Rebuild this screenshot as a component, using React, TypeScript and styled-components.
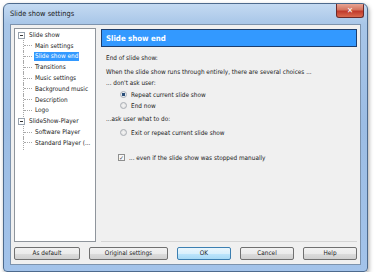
import styled, { createGlobalStyle } from "styled-components";

const GlobalStyle = createGlobalStyle`
  body {
    margin: 0;
    background: #ffffff;
    font-family: Tahoma, "DejaVu Sans Condensed", "Liberation Sans", sans-serif;
  }
`

const Window = styled.div`
  margin: 3px 0 0 3px;
  width: 365px;
  height: 269px;
  box-sizing: border-box;
  border: 1px solid #4d6a8d;
  border-radius: 6px 6px 4px 4px;
  background: linear-gradient(180deg, #c4daf2 0px, #a8c6e8 20px, #9cbde4 120px, #a3c3ea 100%);
  box-shadow: 1px 2px 4px rgba(0, 0, 0, 0.35);
  display: flex;
  flex-direction: column;
  overflow: hidden;
`

const TitleBar = styled.div`
  height: 20px;
  display: flex;
  align-items: flex-start;
  justify-content: space-between;
  padding: 0 3px 0 6px;
`

const Title = styled.span`
  font-size: 7.4px;
  color: #1a1a1a;
  margin-top: 5px;
`

const CloseButton = styled.div`
  width: 26px;
  height: 13px;
  border: 1px solid #6b2a2a;
  border-top: none;
  border-radius: 0 0 3px 3px;
  background: linear-gradient(180deg, #e8a493 0%, #d4735e 45%, #c0392b 55%, #d96a4e 100%);
  display: flex;
  align-items: center;
  justify-content: center;
  color: #fff;
  font-size: 8px;
  font-weight: bold;
`

const Client = styled.div`
  flex: 1;
  margin: 0 6px 6px 6px;
  border: 1px solid #7d93ad;
  background: #f0f0f0;
  display: flex;
  flex-direction: column;
  font-size: 6.4px;
  color: #1b1b1b;
`

const Main = styled.div`
  display: flex;
  gap: 5px;
  padding: 3px 3px 0 3px;
  height: 214px;
`

const Tree = styled.div`
  width: 82px;
  box-sizing: border-box;
  background: #fff;
  border: 1px solid #8f959c;
  padding: 1px 0 0 3px;
`

const TreeRow = styled.div<{ $level: number }>`
  height: 10.8px;
  display: flex;
  align-items: center;
  padding-left: ${p => (p.$level === 0 ? 0 : 16)}px;
  position: relative;
  white-space: nowrap;
  ${p =>
    p.$level === 1 &&
    `&::before {
      content: "";
      position: absolute;
      left: 5px;
      top: -1px;
      bottom: -1px;
      border-left: 1px dotted #a8a8a8;
    }`}
`

const Expander = styled.span`
  width: 7px;
  height: 7px;
  box-sizing: border-box;
  border: 1px solid #98a2ad;
  background: #fff;
  margin-right: 3px;
  display: flex;
  align-items: center;
  justify-content: center;
  &::after {
    content: "";
    width: 3px;
    height: 1px;
    background: #333;
  }
`

const Branch = styled.span`
  width: 8px;
  height: 1px;
  border-top: 1px dotted #a8a8a8;
  margin: 0 2px 0 -10px;
`

const Label = styled.span<{ $selected?: boolean }>`
  padding: 0 1px;
  line-height: 9px;
  background: ${p => (p.$selected ? "#3399ff" : "transparent")};
  color: ${p => (p.$selected ? "#fff" : "#1b1b1b")};
`

const Panel = styled.div`
  flex: 1;
  display: flex;
  flex-direction: column;
  border-bottom: 1px solid #d5d5d5;
`

const PanelHeader = styled.div`
  height: 18px;
  box-sizing: border-box;
  border: 1px solid #1c3e6e;
  background: #3399ff;
  color: #fff;
  font-weight: bold;
  font-size: 7.8px;
  display: flex;
  align-items: center;
  padding-left: 4px;
  margin-top: 1px;
`

const Content = styled.div`
  display: flex;
  flex-direction: column;
  padding: 5px 0 0 5px;
`

const Line = styled.div<{ $indent?: number; $gap?: number }>`
  height: 11px;
  display: flex;
  align-items: center;
  padding-left: ${p => p.$indent ?? 0}px;
  margin-top: ${p => p.$gap ?? 0}px;
`

const Radio = styled.span<{ $on?: boolean }>`
  width: 7px;
  height: 7px;
  box-sizing: border-box;
  border-radius: 50%;
  border: 1px solid #a9aeb4;
  background: radial-gradient(circle, ${p => (p.$on ? "#2a4e78 0 1.6px, #e9eef4 2px" : "#f4f4f4 0, #dedede 100%")});
  margin-right: 4px;
`

const Check = styled.span`
  width: 7px;
  height: 7px;
  box-sizing: border-box;
  border: 1px solid #8e8f8f;
  background: #f7f7f7;
  margin-right: 4px;
  display: flex;
  align-items: center;
  justify-content: center;
  font-size: 6px;
  color: #2b3a4c;
  line-height: 1;
`

const ButtonRow = styled.div`
  flex: 1;
  display: flex;
  align-items: center;
  padding: 0 3px;
  gap: 9px;
`

const Button = styled.div<{ $w: number; $primary?: boolean }>`
  width: ${p => p.$w}px;
  height: 13px;
  box-sizing: border-box;
  border: 1px solid ${p => (p.$primary ? "#3c7fb1" : "#707070")};
  border-radius: 2px;
  background: ${p =>
    p.$primary
      ? "linear-gradient(180deg, #eaf6fd 0%, #d9f0fc 50%, #bee6fd 51%, #a7d9f5 100%)"
      : "linear-gradient(180deg, #f2f2f2 0%, #ebebeb 50%, #dddddd 51%, #cfcfcf 100%)"};
  display: flex;
  align-items: center;
  justify-content: center;
  font-size: 6.4px;
  color: #1b1b1b;
`

const tree = [
  { level: 0, text: "Slide show", expander: true },
  { level: 1, text: "Main settings" },
  { level: 1, text: "Slide show end", selected: true },
  { level: 1, text: "Transitions" },
  { level: 1, text: "Music settings" },
  { level: 1, text: "Background music" },
  { level: 1, text: "Description" },
  { level: 1, text: "Logo" },
  { level: 0, text: "SlideShow-Player", expander: true },
  { level: 1, text: "Software Player" },
  { level: 1, text: "Standard Player (..." },
]

export default function App() {
  return (
    <>
      <GlobalStyle />
      <Window>
        <TitleBar>
          <Title>Slide show settings</Title>
          <CloseButton>✕</CloseButton>
        </TitleBar>
        <Client>
          <Main>
            <Tree>
              {tree.map(item => (
                <TreeRow key={item.text} $level={item.level}>
                  {item.expander ? <Expander /> : <Branch />}
                  <Label $selected={item.selected}>{item.text}</Label>
                </TreeRow>
              ))}
            </Tree>
            <Panel>
              <PanelHeader>Slide show end</PanelHeader>
              <Content>
                <Line>End of slide show:</Line>
                <Line $gap={3}>When the slide show runs through entirely, there are several choices ...</Line>
                <Line>... don't ask user:</Line>
                <Line $indent={14} $gap={1}><Radio $on />Repeat current slide show</Line>
                <Line $indent={14}><Radio />End now</Line>
                <Line $gap={2}>...ask user what to do:</Line>
                <Line $indent={14} $gap={3}><Radio />Exit or repeat current slide show</Line>
                <Line $indent={12} $gap={14}><Check>✓</Check>... even if the slide show was stopped manually</Line>
              </Content>
            </Panel>
          </Main>
          <ButtonRow>
            <Button $w={66}>As default</Button>
            <Button $w={79}>Original settings</Button>
            <Button $w={54} $primary>OK</Button>
            <Button $w={54}>Cancel</Button>
            <Button $w={54}>Help</Button>
          </ButtonRow>
        </Client>
      </Window>
    </>
  )
}
